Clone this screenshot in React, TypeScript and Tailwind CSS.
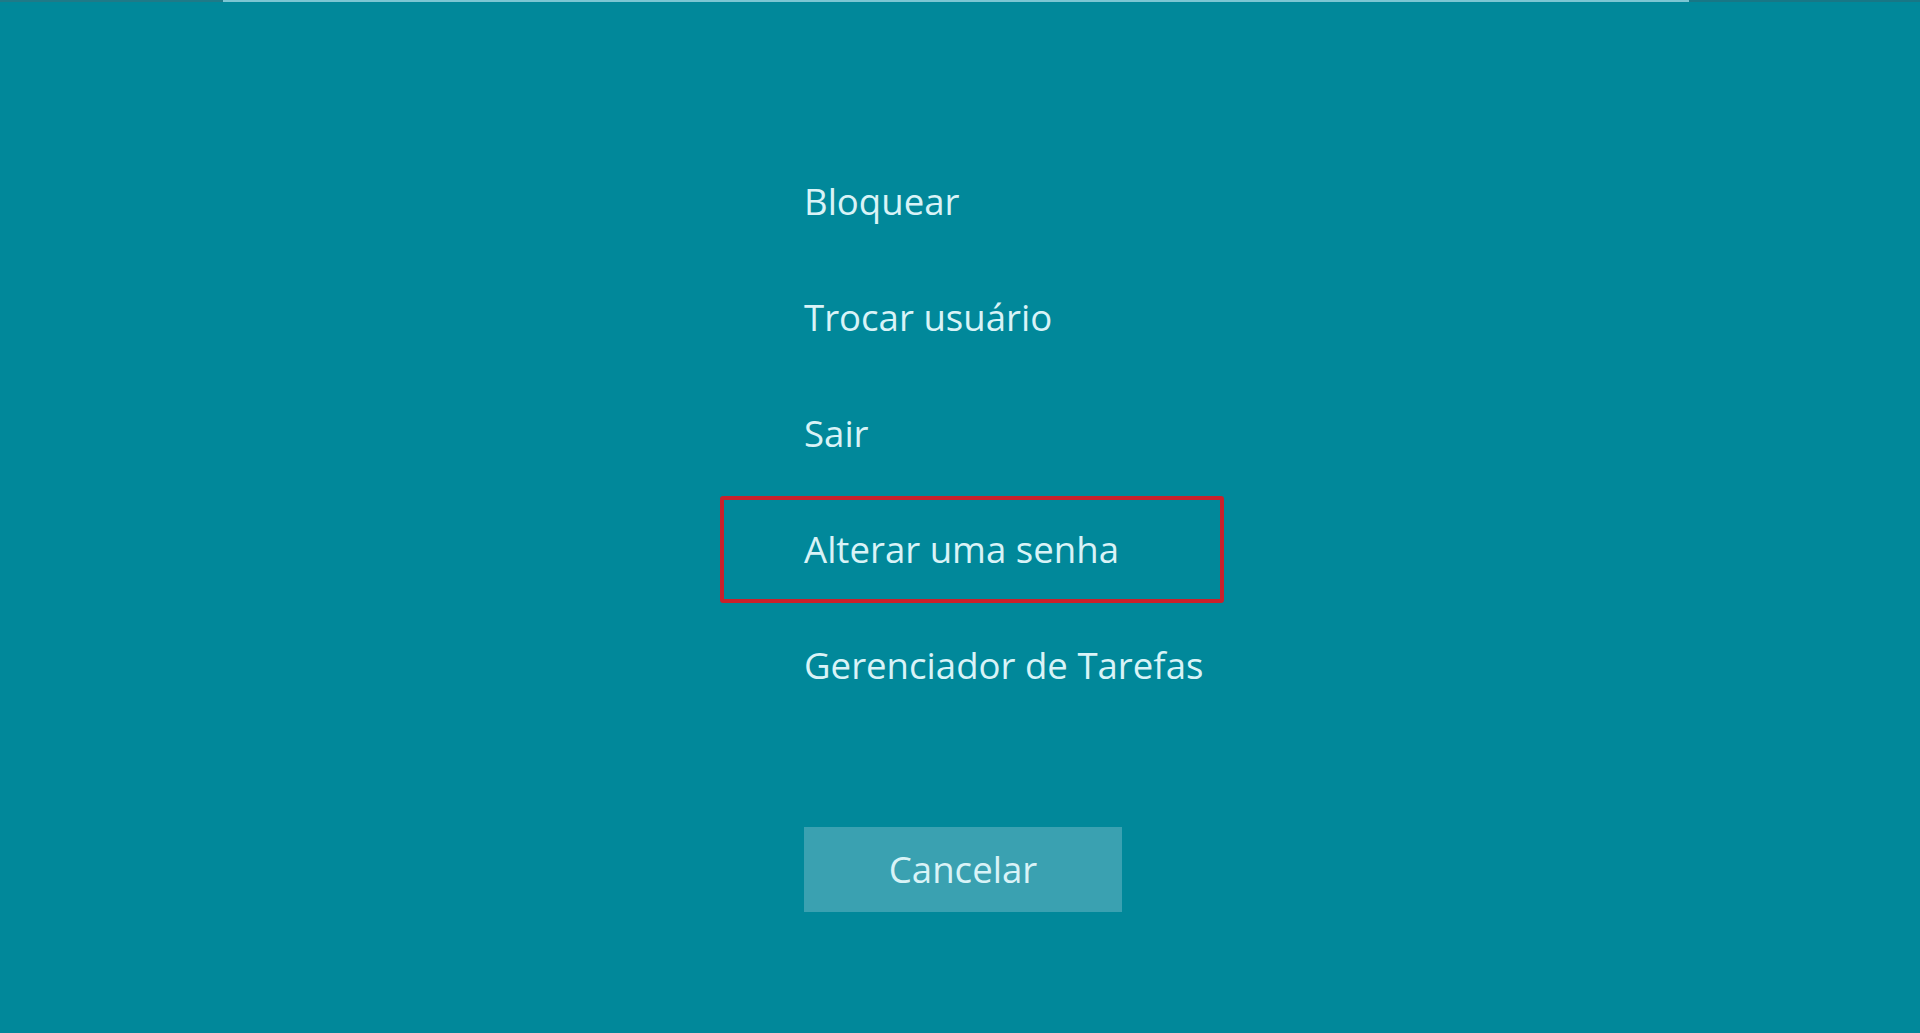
import React from 'react';

const items = ['Bloquear', 'Trocar usuário', 'Sair', 'Alterar uma senha', 'Gerenciador de Tarefas'];

export default function App() {
  return (
    <div
      className="relative w-full h-[1033px] bg-[#01889a] overflow-hidden text-[#d9f3f7]"
      style={{ fontFamily: '"Open Sans", "Noto Sans", sans-serif' }}
    >
      <div className="h-[2px] flex">
        <div className="w-[223px] bg-[#1f7a88]" />
        <div className="w-[1466px] bg-[#7cc6d3]" />
        <div className="flex-1 bg-[#187786]" />
      </div>

      <div className="pl-[804px] pt-[141px] flex flex-col">
        {items.map((label) => (
          <div key={label} className="relative h-[116px] flex items-center">
            <span className="text-[36.6px] leading-none whitespace-nowrap">{label}</span>
            {label === 'Alterar uma senha' && (
              <div className="absolute left-[-84px] top-[5px] w-[504px] h-[107px] border-[4px] border-[#c9212b] rounded-[3px]" />
            )}
          </div>
        ))}

        <div className="mt-[104px] w-[318px] h-[85px] bg-[#3aa1b1] flex items-center justify-center">
          <span className="text-[36.6px] leading-none">Cancelar</span>
        </div>
      </div>
    </div>
  );
}
